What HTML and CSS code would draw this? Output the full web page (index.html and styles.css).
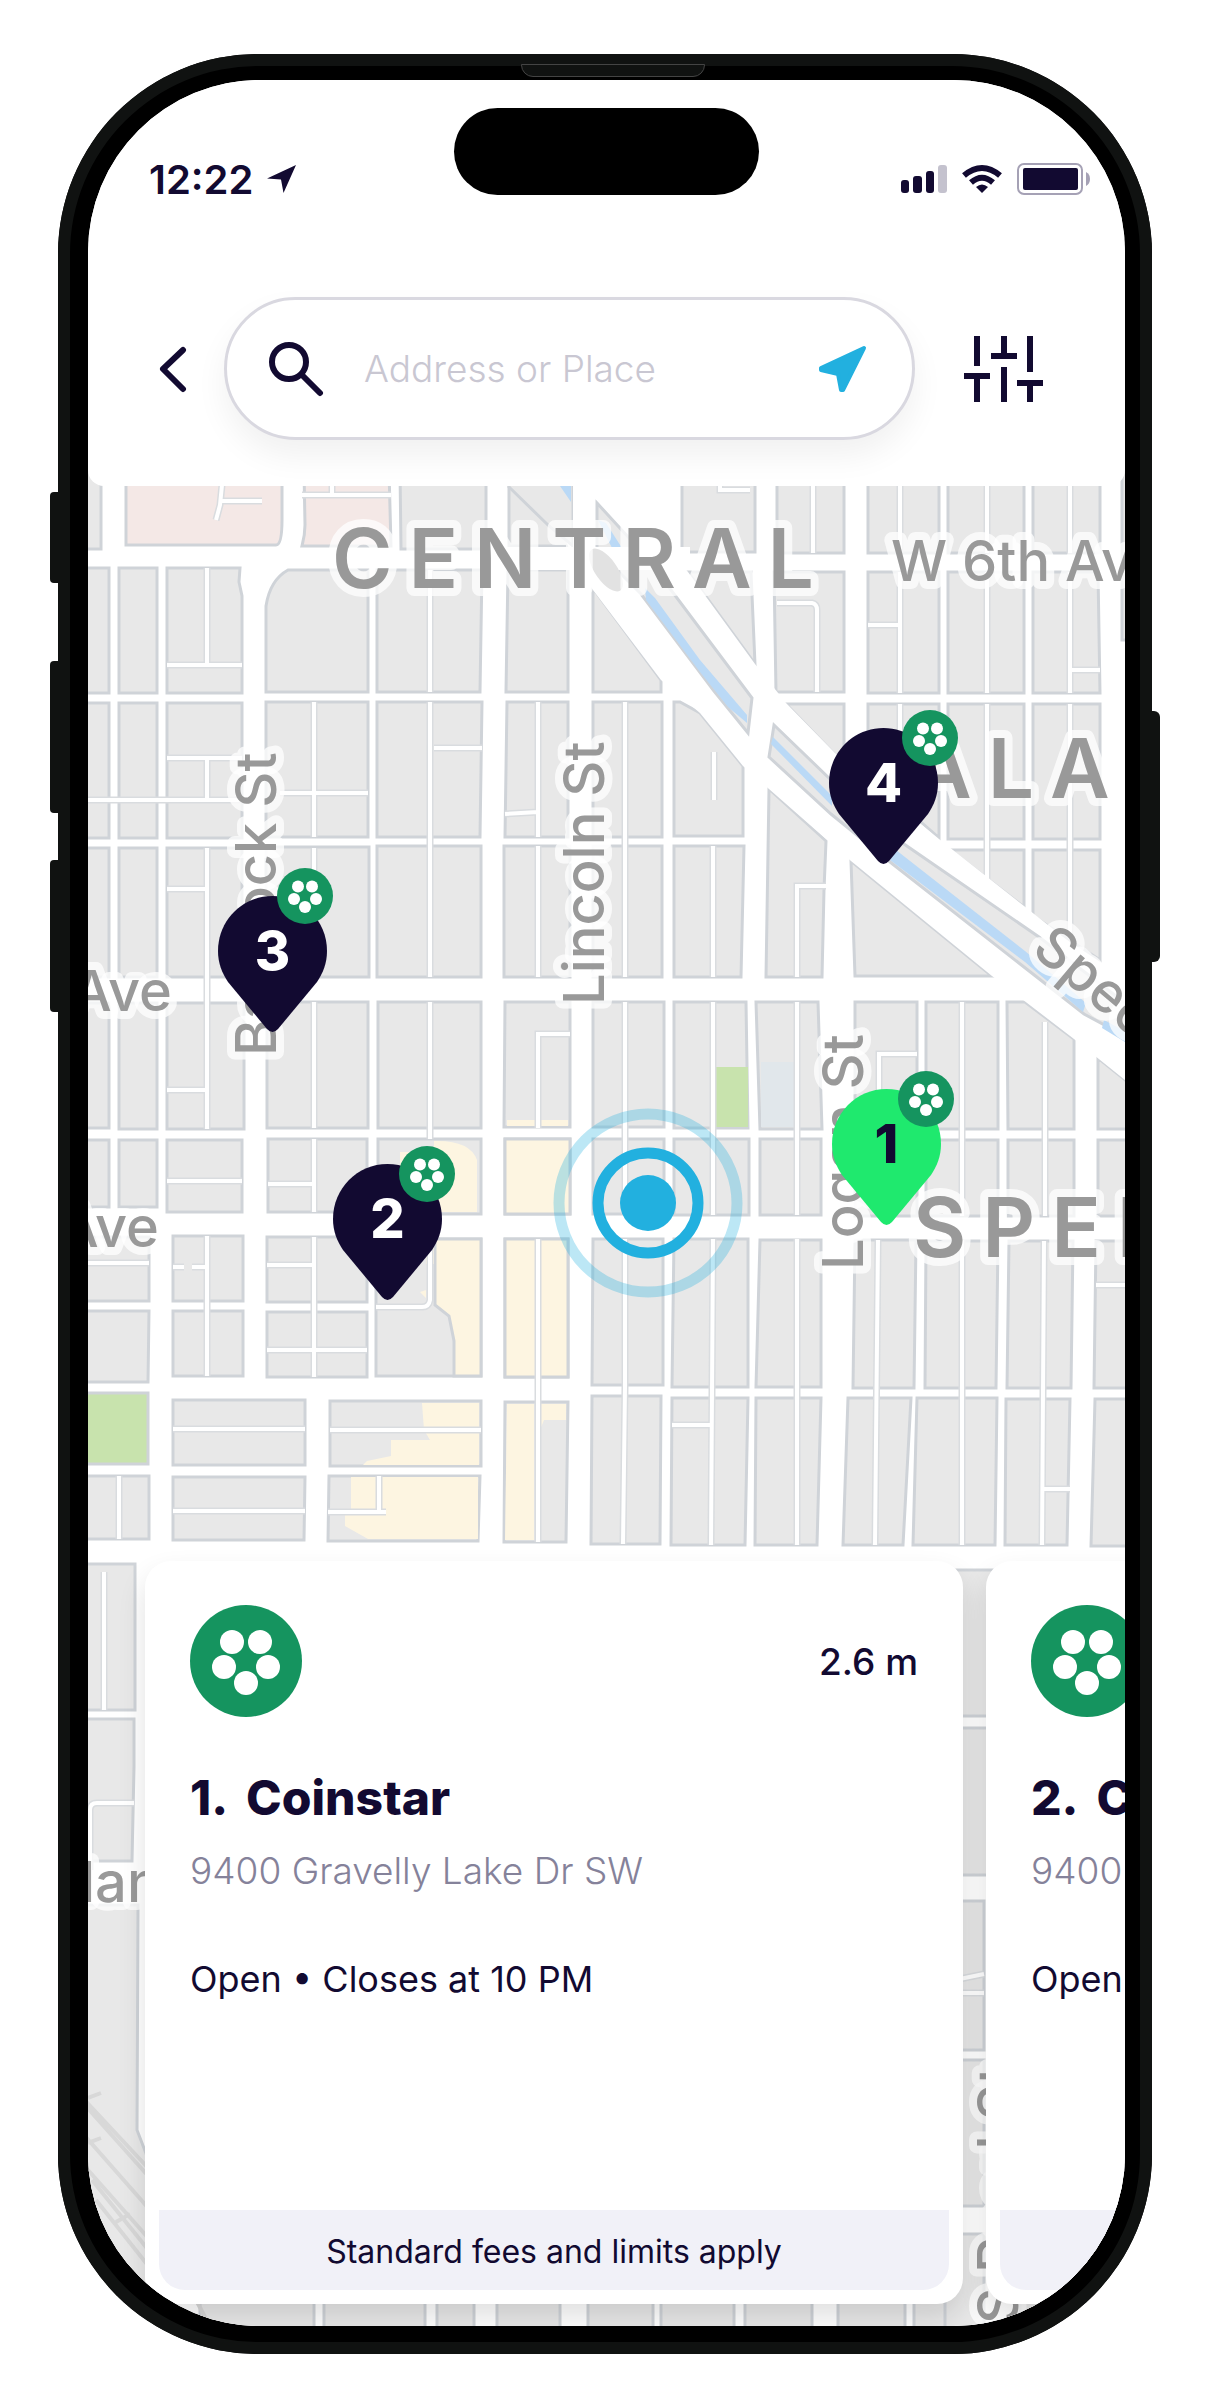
FILE: index.html
```html
<!DOCTYPE html>
<html lang="en">
<head>
    <meta charset="UTF-8">
    <meta name="viewport" content="width=device-width, initial-scale=1.0">
    <title>Find a Location</title>
    <link rel="stylesheet" href="styles.css">
</head>
<body>
    <svg class="sprite" aria-hidden="true">
        <symbol id="coinstar" viewBox="0 0 112 112">
            <circle cx="56" cy="56" r="56" fill="#15945f"/>
            <g fill="#fff">
                <circle cx="42" cy="37" r="12"/>
                <circle cx="70" cy="37" r="12"/>
                <circle cx="34" cy="62" r="12"/>
                <circle cx="78" cy="62" r="12"/>
                <circle cx="56" cy="78" r="12"/>
            </g>
        </symbol>
        <symbol id="drop" viewBox="0 0 109 136">
            <path d="M54.500 0C84.600 0 109 24.400 109 55C109 67 105 77 99 86L60 133Q54.500 139 49 133L10 86C4 77 0 67 0 55C0 24.400 24.400 0 54.500 0Z" fill="currentColor"/>
        </symbol>
    </svg>

    <main class="phone">
        <span class="side_btn mute"></span>
        <span class="side_btn vol_up"></span>
        <span class="side_btn vol_down"></span>
        <span class="side_btn power"></span>
        <span class="speaker"></span>

        <div class="screen">
            <div class="island"></div>

            <header class="top">
                <div class="status">
                    <div class="status_left">
                        <span>12:22</span>
                        <svg width="30" height="30" viewBox="0 0 30 30"><path d="M29 1L0 14.500L14 15.500L16.500 29Z" fill="#120a31"/></svg>
                    </div>
                    <div class="status_right">
                        <svg width="46" height="30" viewBox="0 0 46 30" fill="#120a31">
                            <rect x="0" y="16" width="8" height="13" rx="3"/>
                            <rect x="12" y="12" width="9" height="17" rx="3"/>
                            <rect x="25" y="7" width="8" height="22" rx="3"/>
                            <rect x="37" y="1" width="9" height="28" rx="3" fill="#c4c2ce"/>
                        </svg>
                        <svg width="40" height="30" viewBox="0 0 40 30" fill="none" stroke="#120a31" stroke-width="6">
                            <path d="M2 11.500Q20 -3.500 38 11.500"/>
                            <path d="M9 18.500Q20 9 31 18.500"/>
                            <path d="M14 23Q20 18 26 23L20 29Z" fill="#120a31" stroke="none"/>
                        </svg>
                        <svg width="75" height="32" viewBox="0 0 75 32">
                            <rect x="1" y="1" width="64" height="30" rx="6" fill="none" stroke="#a5a1b5" stroke-width="2"/>
                            <rect x="6" y="5" width="55" height="22" rx="2" fill="#120a31"/>
                            <path d="M69 9Q73 11 73 16T69 23Z" fill="#a5a1b5"/>
                        </svg>
                    </div>
                </div>

                <form class="search_row">
                    <button type="button" class="icon_btn" aria-label="Back">
                        <svg width="32" height="48" viewBox="0 0 32 48" fill="none" stroke="#120a31" stroke-width="6" stroke-linecap="round" stroke-linejoin="round"><path d="M26 5L6 24L26 44"/></svg>
                    </button>
                    <div class="search_box">
                        <svg width="56" height="56" viewBox="0 0 56 56" fill="none" stroke="#120a31" stroke-width="6" stroke-linecap="round"><circle cx="21" cy="21" r="17"/><path d="M34 34L52 52"/></svg>
                        <label class="hidden" for="place">Address or Place</label>
                        <input type="text" id="place" placeholder="Address or Place">
                        <button type="button" class="icon_btn" aria-label="Use my location">
                            <svg width="50" height="48" viewBox="0 0 50 48"><path d="M46 3L3 23V25L20 29L23 45H25Z" fill="#22b0df" stroke="#22b0df" stroke-width="4" stroke-linejoin="round"/></svg>
                        </button>
                    </div>
                    <button type="button" class="icon_btn" aria-label="Filters">
                        <svg width="80" height="66" viewBox="0 0 80 66" fill="none" stroke="#120a31" stroke-width="6"><path d="M13 0V30M0 40H26M13 40V66M40 0V20M27 20H53M40 31V66M66 0V36M53 47H79M66 47V66"/></svg>
                    </button>
                </form>
            </header>

            <section class="map">
                <svg class="streets" viewBox="88 470 1037 1856" preserveAspectRatio="xMinYMin slice">
                    <rect x="88" y="470" width="1037" height="1856" fill="#fff"/>

                    <!-- city blocks -->
                    <g class="block">
                        <path d="M80 470H101V549H80ZM400 470H486V549H401ZM509 470H573V546H509ZM682 470H755V552H682ZM777 470H844V553H777ZM868 470H939V553H868ZM948 470H1024V553H948ZM1033 470H1100V553H1033ZM1122 470H1140V640H1122Z"/>
                        <path d="M80 568H109V693H80ZM119 568H157V693H119ZM167 568H240L239 582L242 596V693H167ZM288 570H368V692H266V606Q270 580 288 570ZM377 570H482L480 692H377ZM508 570H568V692H506ZM593 588L661 680V692H593ZM688 572H751L755 664ZM774 572H844V692H776ZM868 572H939V693H868ZM948 572H1024V693H948ZM1033 572H1098L1100 693H1033Z"/>
                        <path d="M80 703H109V838H80ZM119 703H157V838H119ZM167 703H242V838H167ZM266 702H368V837H266ZM377 702H482L480 837H377ZM507 702H568V837H505ZM593 702H662V837H593ZM674 702H680L700 713L743 766V836H674ZM786 704H844V764ZM868 704H939V838L868 776ZM948 704H1024V839H948ZM1033 704H1100V839H1033Z"/>
                        <path d="M80 848H109V977H80ZM119 848H157V977H119ZM167 848H242V977H167ZM266 847H369V977H266ZM377 846H481V977H377ZM504 846H570V977H504ZM593 846H662V977H593ZM674 846H744L741 977H674ZM769 789L826 841L824 890L822 977H766ZM851 861L992 976H855ZM950 850H1024V907ZM1033 850H1100V960L1033 916Z"/>
                        <path d="M80 1003H109V1128H80ZM119 1003H157V1129H119ZM167 1003H244V1129H167ZM267 1002H368V1128H267ZM378 1002H481V1128H378ZM505 1002H570V1127H504ZM593 1002H664V1127H593ZM674 1002H746L748 1128H674ZM756 1002H818L822 1129H760ZM855 1002H917V1128H855ZM926 1002H998V1129H926ZM1007 1002H1025L1074 1039V1129H1008ZM1098 1058L1140 1092V1129H1098Z"/>
                        <path d="M80 1140H109V1207H80ZM119 1140H157V1207H119ZM167 1140H242V1212H167ZM268 1139H367V1212H268ZM378 1139H481V1214H378ZM505 1139H570V1214H505ZM593 1139H664V1214H593ZM674 1139H749V1215H674ZM760 1139H821V1215H760ZM855 1139H917V1216H855ZM926 1140H998V1216H926ZM1008 1140H1074V1216H1008ZM1098 1140H1140V1216H1098Z"/>
                        <path d="M80 1237H149V1301H80ZM173 1236H243V1301H173ZM267 1237H367V1302H267ZM376 1239H481V1376H376ZM505 1239H568V1377H505ZM593 1239H663V1385H592ZM674 1239H748V1387H672ZM760 1240H821V1387H756ZM855 1240H916L914 1388H853ZM926 1241H998L996 1388H925ZM1009 1241H1073L1071 1388H1007ZM1096 1241H1140V1388H1094Z"/>
                        <path d="M80 1311H149L148 1382H80ZM173 1311H243V1376H173ZM267 1312H367V1377H267Z"/>
                        <path d="M173 1400H305V1465H173ZM330 1401H481V1466H330ZM505 1402H568L566 1542H504ZM592 1396H661L660 1544H591ZM672 1398H748L745 1545H671ZM756 1398H821L817 1545H755ZM848 1398H911L903 1545H843ZM917 1398H997L995 1545H913ZM1006 1399H1070L1067 1545H1005ZM1095 1399H1140V1546H1091Z"/>
                        <path d="M80 1476H149V1539H80ZM173 1477H305L304 1540H173ZM329 1476H480L478 1541H328Z"/>
                        <path d="M80 1564H135V1710H80ZM80 1719H134V1767L132 1861H80ZM80 1905H138L137 2130L160 2190V2340H80Z"/>
                        <path d="M948 1570H996V1716H948ZM940 1728H1000V1875H940ZM940 1901H984V2050H940ZM940 2060H984V2206H940ZM940 2234H984V2340H940Z"/>
                        <path d="M200 2240H314V2340H200ZM324 2240H425V2340H324ZM437 2240H474V2340H437ZM497 2240H560V2340H497ZM588 2240H653V2340H588ZM661 2240H734V2340H661ZM745 2240H812V2340H745ZM838 2240H905V2340H838ZM914 2240H945V2340H914ZM1020 2240H1140V2340H1020Z"/>
                    </g>

                    <!-- hospitals, shops, parks -->
                    <g class="edged">
                        <path class="pink" d="M126 470H282V520Q282 545 276 545H126ZM304 470H389L391 546H302Q305 535 305 525Z"/>
                        <path class="shop" d="M505 1139H570V1214H505ZM505 1239H568V1377H505ZM435 1239H481V1376H454V1341L449 1316L435 1305Z"/>
                        <path class="park" d="M80 1393H148V1464H80Z"/>
                    </g>
                    <path class="shop" d="M400 1152H434V1141Q470 1140 477 1160V1212H400ZM434 1264H426V1290L420 1292L426 1298V1241H434ZM422 1403H479V1465H363L367 1461L391 1456V1440H430L424 1430ZM351 1477H478V1539H368L345 1526V1514L351 1510ZM507 1404H534V1540H505ZM540 1404H566V1420H544L540 1430ZM507 1120H568V1126H507Z"/>
                    <path class="park" d="M716 1067H748V1127H716Z"/>
                    <path d="M761 1062H796V1127H761Z" fill="#e1e7eb"/>

                    <!-- back lanes -->
                    <g class="lanes">
                        <path id="lane" d="M207 568V664M167 665H242M222 485L220 505L216 520M222 501H262M302 495H391M332 485V495M430 570V692M813 485V553M900 485V553M987 485V553M1070 485V553M720 485V490H750M777 603H812Q817 604 817 610V692M900 572V693M868 625H900M987 572V693M1070 572V693M1070 670H1100M314 702V837M167 758H242M207 760V799M80 800H242M280 793H368M430 702V977M434 748H482M538 702V837M505 814L538 812M538 846V977M625 702V977M714 752V800M900 704V790M987 704V880M1070 704V935M207 848V1129M167 889H207M314 848V977M713 846V977M797 977V886H826M314 1002V1128M430 1002V1139M538 1128V1034H570M625 1002V1214M713 1002V1215M797 1002V1215M879 1128V1054H917M962 1002V1216M1045 1022V1216M167 1090H207M167 1181H242M314 1139V1212M268 1184H314M430 1239V1300Q429 1307 422 1307H376M80 1263H149M207 1236V1376M173 1267H184M192 1267H207M314 1237V1377M267 1265H314M267 1350H367M538 1239V1542M625 1239V1387L623 1544M713 1239L711 1545M797 1239V1545M878 1240L875 1545M962 1240V1545M1044 1241L1042 1545M1096 1285H1140M173 1429H305M330 1430H481M119 1476V1539M173 1511H305M379 1476V1510M328 1512H386M672 1425H711M1043 1489H1070M104 1572V1710M90 1870V1810Q90 1803 97 1803H134M940 1993H984M950 1981L984 1974"/>
                        <use href="#lane" class="lane_fill"/>
                    </g>

                    <!-- river road -->
                    <path d="M541 470H602L616 485L688 572L755 664L786 703L835 753L939 839L1024 906L1140 998V1092L1074 1039L992 976L851 861L769 789L743 766L700 713L661 680L593 590L573 560Z" fill="#fff"/>
                    <g class="block">
                        <path d="M525 470H573V546L549 526L509 487V470ZM597 503L640 550L671 590L752 698L748 733L714 691L641 594L597 550ZM774 725L831 780L904 844L1039 937L1125 1003V1036L1084 1014L890 862L831 814L769 757Z"/>
                    </g>
                    <path d="M549 470L571 502V470ZM598 520L606 523L622 548H612ZM645 588L655 598L700 660L747 715V723L728 707L700 672L646 600ZM773 737L832 796V806L771 744ZM896 850L1025 951L1086 1003L1083 1012L1025 962L890 860ZM1104 1020L1130 1034V1045L1102 1028Z" fill="#bad9f6"/>
                    <path d="M573 470H593V560H573ZM486 547H690V570H486Z" fill="#fff"/>
                    <ellipse cx="606" cy="570" rx="11" ry="25" transform="rotate(-35 606 570)" fill="#e2e2e2"/>

                    <!-- rail yard -->
                    <path class="rail" d="M80 2095L150 2170M84 2104L150 2178M84 2135L150 2210M88 2170L150 2240M92 2180L150 2252M96 2200L150 2268M88 2098L101 2093M88 2143L101 2138M116 2222L130 2214M196 2300L212 2330"/>

                    <g class="district">
                        <text x="332" y="588">CENTRAL</text>
                        <text x="912" y="798">ALA</text>
                        <text x="913" y="1257">SPEER</text>
                    </g>
                    <g class="street">
                        <text x="891" y="581">W 6th Ave</text>
                        <text x="172" y="1011" text-anchor="end">Ave</text>
                        <text x="159" y="1247" text-anchor="end">Ave</text>
                        <text x="81" y="1902">lan</text>
                        <text transform="translate(276 1056) rotate(-90)">Bannock St</text>
                        <text transform="translate(604 1005) rotate(-90)">Lincoln St</text>
                        <text transform="translate(863 1270) rotate(-90)">Logan St</text>
                        <text transform="translate(1030 952) rotate(40)">Speer Blvd</text>
                        <text transform="translate(1018 2324) rotate(-90)">S Pearl St</text>
                    </g>

                    <circle cx="648" cy="1203" r="89" fill="none" stroke="#22b0df" stroke-opacity=".3" stroke-width="11"/>
                    <circle cx="648" cy="1203" r="50" fill="none" stroke="#22b0df" stroke-width="11"/>
                    <circle cx="648" cy="1203" r="28" fill="#22b0df"/>
                </svg>

                <button type="button" class="pin pin1"><svg class="drop"><use href="#drop"/></svg><span>1</span><svg class="badge"><use href="#coinstar"/></svg></button>
                <button type="button" class="pin pin2"><svg class="drop"><use href="#drop"/></svg><span>2</span><svg class="badge"><use href="#coinstar"/></svg></button>
                <button type="button" class="pin pin3"><svg class="drop"><use href="#drop"/></svg><span>3</span><svg class="badge"><use href="#coinstar"/></svg></button>
                <button type="button" class="pin pin4"><svg class="drop"><use href="#drop"/></svg><span>4</span><svg class="badge"><use href="#coinstar"/></svg></button>

                <div class="cards">
                    <article class="card">
                        <div class="card_body">
                            <div class="card_head">
                                <svg class="logo"><use href="#coinstar"/></svg>
                                <p class="distance">2.6 m</p>
                            </div>
                            <h2><span>1.</span><span>Coinstar</span></h2>
                            <p class="address">9400 Gravelly Lake Dr SW</p>
                            <p class="hours">Open • Closes at 10 PM</p>
                        </div>
                        <p class="fees">Standard fees and limits apply</p>
                    </article>
                    <article class="card">
                        <div class="card_body">
                            <div class="card_head">
                                <svg class="logo"><use href="#coinstar"/></svg>
                            </div>
                            <h2><span>2.</span><span>Coinstar</span></h2>
                            <p class="address">9400 Gravelly Lake Dr SW</p>
                            <p class="hours">Open • Closes at 10 PM</p>
                        </div>
                        <p class="fees"></p>
                    </article>
                </div>
            </section>
        </div>
    </main>
</body>
</html>
```
FILE: styles.css
```css
*{
    margin: 0px;
    padding: 0px;
    box-sizing: border-box;
}
body{
    background-color: #fff;
    color: #120a31;
    font-family: Inter, "Open Sans", sans-serif;
    padding: 54px 63px 45px 58px;
}
button{
    border: none;
    background: none;
    font: inherit;
    cursor: pointer;
}
svg{
    display: block;
}
.sprite{
    position: absolute;
    width: 0px;
    height: 0px;
}
.hidden{
    position: absolute;
    width: 1px;
    height: 1px;
    overflow: hidden;
    clip-path: inset(50%);
}

/* phone */
.phone{
    position: relative;
    padding: 26px 27px 28px 30px;
    background-color: #000;
    border-radius: 200px;
    box-shadow: inset 0 0 0 12px #101211;
}
.side_btn{
    position: absolute;
    width: 8px;
    background-color: #101211;
}
.mute{
    left: -8px;
    top: 438px;
    height: 91px;
    border-radius: 4px 0 0 4px;
}
.vol_up{
    left: -8px;
    top: 607px;
    height: 152px;
    border-radius: 4px 0 0 4px;
}
.vol_down{
    left: -8px;
    top: 806px;
    height: 152px;
    border-radius: 4px 0 0 4px;
}
.power{
    right: -8px;
    top: 657px;
    height: 251px;
    border-radius: 0 6px 6px 0;
}
.speaker{
    position: absolute;
    top: 10px;
    left: 50%;
    width: 184px;
    height: 13px;
    margin-left: -84px;
    border: 1px solid #444;
    border-radius: 0 0 12px 12px;
    background-color: #101211;
}
.screen{
    position: relative;
    display: flex;
    flex-direction: column;
    overflow: hidden;
    border-radius: 172px;
    background-color: #fff;
}
.island{
    position: absolute;
    top: 28px;
    left: 50%;
    z-index: 2;
    width: 305px;
    height: 87px;
    margin-left: -153px;
    border-radius: 44px;
    background-color: #000;
}

/* status bar and search */
.top{
    position: relative;
    z-index: 1;
    padding: 74px 33px 46px 61px;
    margin-bottom: -16px;
    background-color: #fff;
    border-radius: 0 0 16px 16px;
}
.status{
    display: flex;
    justify-content: space-between;
    align-items: center;
    height: 50px;
}
.status_left{
    display: flex;
    align-items: center;
    gap: 14px;
    font-size: 40px;
    font-weight: 600;
}
.status_right{
    display: flex;
    align-items: center;
    gap: 15px;
}
.search_row{
    display: flex;
    align-items: center;
    gap: 32px;
    margin-top: 93px;
    padding: 0 48px 0 8px;
}
.icon_btn{
    flex: none;
}
.search_box{
    flex: 1;
    display: flex;
    align-items: center;
    gap: 40px;
    min-width: 0px;
    height: 143px;
    margin: 0 17px 0 3px;
    padding: 0 44px 0 41px;
    border: 3px solid #d9d8e0;
    border-radius: 72px;
    background-color: #fff;
    box-shadow: 0 16px 32px rgba(0, 0, 0, 0.06);
}
.search_box input{
    flex: 1;
    min-width: 0px;
    border: none;
    outline: none;
    color: #120a31;
    font-family: inherit;
    font-size: 37px;
    font-weight: 300;
}
.search_box input::placeholder{
    color: #c9c7d2;
    opacity: 1;
}

/* map */
.map{
    position: relative;
    padding: 1091px 0 22px 57px;
    overflow: hidden;
}
.streets{
    position: absolute;
    left: 0px;
    top: 0px;
    width: 100%;
    height: 100%;
}
.block{
    fill: #e8e8e8;
    stroke: #cfd3d8;
    stroke-width: 3;
}
.edged{
    stroke: #cfd3d8;
    stroke-width: 3;
}
.pink{
    fill: #f4e8e6;
}
.shop{
    fill: #fdf5e1;
}
.park{
    fill: #c8e3ad;
}
.lanes{
    fill: none;
    stroke: #d9dcdf;
    stroke-width: 7;
}
.lane_fill{
    stroke: #fff;
    stroke-width: 4;
}
.rail{
    fill: none;
    stroke: #d8d8d8;
    stroke-width: 4;
}
.district, .street{
    fill: #999;
    stroke: rgba(255, 255, 255, 0.75);
    stroke-width: 16;
    stroke-linejoin: round;
    paint-order: stroke;
}
.district{
    font-size: 82px;
    font-weight: 600;
    letter-spacing: 16px;
}
.street{
    font-size: 56px;
    font-weight: 500;
}
.pin{
    position: absolute;
    width: 109px;
    height: 136px;
    color: #120a31;
}
.pin .drop{
    width: 100%;
    height: 100%;
}
.pin span{
    position: absolute;
    left: 0px;
    top: 22px;
    width: 100%;
    color: #fff;
    font-size: 54px;
    font-weight: 800;
    line-height: 66px;
    text-align: center;
}
.pin .badge{
    position: absolute;
    left: 66px;
    top: -18px;
    width: 56px;
    height: 56px;
}
.pin1{
    left: 744px;
    top: 619px;
    color: #1fe96e;
}
.pin1 span{
    color: #120a31;
}
.pin2{
    left: 245px;
    top: 694px;
}
.pin3{
    left: 130px;
    top: 426px;
}
.pin4{
    left: 741px;
    top: 258px;
}
.pin3 .badge{
    left: 59px;
    top: -28px;
}
.pin4 .badge{
    left: 73px;
}

/* location cards */
.cards{
    position: relative;
    display: flex;
    gap: 23px;
}
.card{
    flex: 0 0 818px;
    padding: 44px 14px 14px;
    border-radius: 26px;
    background-color: #fff;
    box-shadow: 0 14px 28px rgba(0, 0, 0, 0.12);
}
.card_body{
    height: 605px;
    padding: 0 31px;
}
.card_head{
    display: flex;
    justify-content: space-between;
    align-items: center;
}
.logo{
    width: 112px;
    height: 112px;
}
.distance{
    font-size: 37px;
    font-weight: 500;
}
.card h2{
    display: flex;
    gap: 18px;
    margin-top: 53px;
    font-size: 48px;
    font-weight: 800;
    line-height: 56px;
}
.address, .hours{
    line-height: 50px;
    white-space: nowrap;
}
.address{
    margin-top: 20px;
    color: #85829a;
    font-size: 37px;
    font-weight: 300;
}
.hours{
    margin-top: 58px;
    font-size: 36px;
}
.fees{
    height: 80px;
    border-radius: 0 0 26px 26px;
    background-color: #f1f1f8;
    font-size: 32px;
    line-height: 84px;
    text-align: center;
}
```
